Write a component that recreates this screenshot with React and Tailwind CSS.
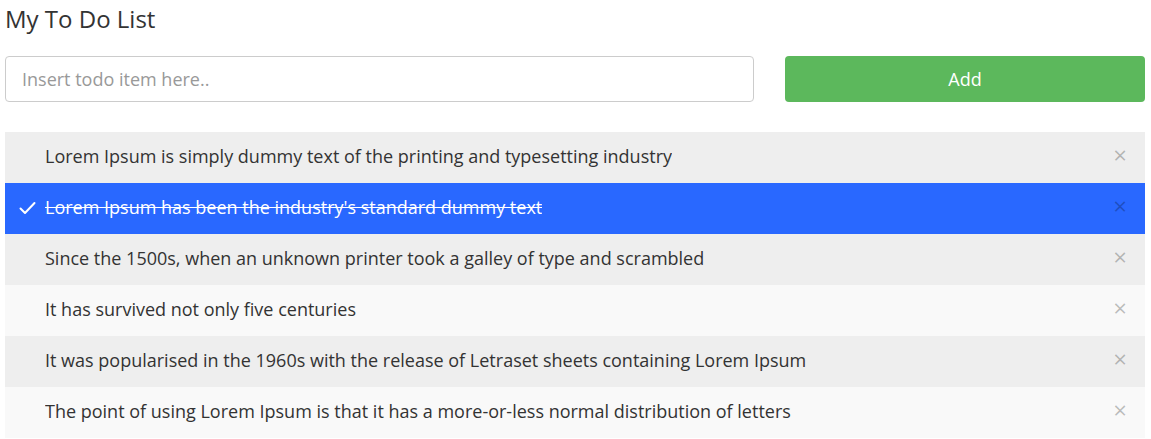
import React, { useState } from 'react';

const initialItems = [
  { text: 'Lorem Ipsum is simply dummy text of the printing and typesetting industry', done: false },
  { text: "Lorem Ipsum has been the industry's standard dummy text", done: true },
  { text: 'Since the 1500s, when an unknown printer took a galley of type and scrambled', done: false },
  { text: 'It has survived not only five centuries', done: false },
  { text: 'It was popularised in the 1960s with the release of Letraset sheets containing Lorem Ipsum', done: false },
  { text: 'The point of using Lorem Ipsum is that it has a more-or-less normal distribution of letters', done: false },
];

const App = () => {
  const [items, setItems] = useState(initialItems);
  const [value, setValue] = useState('');

  const addItem = () => {
    if (!value.trim()) return;
    setItems([...items, { text: value, done: false }]);
    setValue('');
  };

  const toggle = (i) => setItems(items.map((it, j) => (j === i ? { ...it, done: !it.done } : it)));
  const remove = (i) => setItems(items.filter((_, j) => j !== i));

  return (
    <div className="pl-[5px] pr-[6px] pt-[3px] text-[#333] bg-white min-h-screen" style={{ fontFamily: '"Open Sans", sans-serif' }}>
      <h2 className="text-[24px] leading-[31px] font-normal">My To Do List</h2>

      <div className="flex gap-[31px] mt-[22px]">
        <input
          type="text"
          className="w-[749px] h-[46px] border border-[#ccc] rounded-[4px] px-[16px] text-[18px] placeholder:text-[#999] focus:outline-none"
          placeholder="Insert todo item here.."
          value={value}
          onChange={(e) => setValue(e.target.value)}
        />
        <button
          onClick={addItem}
          className="flex-1 h-[46px] rounded-[4px] bg-[#5cb85c] text-white text-[18px]"
        >
          Add
        </button>
      </div>

      <ul className="mt-[30px]">
        {items.map((item, i) => (
          <li
            key={i}
            onClick={() => toggle(i)}
            className={
              'relative flex items-center h-[51px] pl-[40px] pr-[40px] pb-[2px] text-[18px] cursor-pointer ' +
              (item.done ? 'bg-[#2968ff] text-white line-through' : i % 2 === 0 ? 'bg-[#eeeeee]' : 'bg-[#f9f9f9]')
            }
          >
            {item.done && (
              <svg className="absolute left-[14px] top-[18px]" width="17" height="14" viewBox="0 0 17 14" fill="none">
                <path d="M1.5 7.5 L6 12 L15.5 2" stroke="white" strokeWidth="2" strokeLinecap="round" strokeLinejoin="round" />
              </svg>
            )}
            <span className="truncate">{item.text}</span>
            <span
              onClick={(e) => {
                e.stopPropagation();
                remove(i);
              }}
              className="absolute right-[18px] top-[11px] text-[24px] leading-[24px] no-underline text-black/25"
            >
              ×
            </span>
          </li>
        ))}
      </ul>
    </div>
  );
};

export default App;
